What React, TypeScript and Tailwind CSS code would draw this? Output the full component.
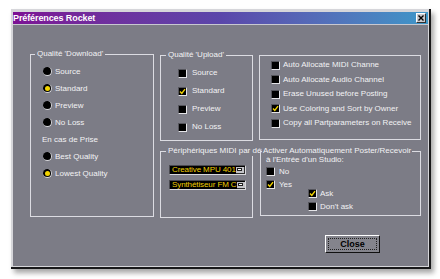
const Check = () => (
  <svg width="7" height="7" viewBox="0 0 7 7" className="block">
    <path d="M1 3.5 L2.8 5.5 L6 1.2" stroke="#f2d400" strokeWidth="1.4" fill="none" />
  </svg>
);

const CheckBox = ({ checked = false }: { checked?: boolean }) => (
  <div className="w-[9px] h-[9px] shrink-0 bg-black border border-t-[#55555c] border-l-[#55555c] border-b-[#e4e4e8] border-r-[#e4e4e8] flex items-center justify-center">
    {checked && <Check />}
  </div>
);

const Radio = ({ checked = false }: { checked?: boolean }) => (
  <div className="w-[9px] h-[9px] shrink-0 rounded-full bg-black border-b border-r border-[#d8d8dc] flex items-center justify-center">
    {checked && <div className="w-[5px] h-[5px] rounded-full bg-[#f2d400]" />}
  </div>
);

const Group = ({
  label,
  className,
  labelClass = "left-[4px] px-[2px]",
  children,
}: {
  label?: string;
  className: string;
  labelClass?: string;
  children: React.ReactNode;
}) => (
  <div className={`relative border border-[#dcdce2] ${className}`}>
    {label && (
      <span
        className={`absolute -top-[6px] leading-[10px] whitespace-nowrap bg-[#7c7c86] ${labelClass}`}
      >
        {label}
      </span>
    )}
    {children}
  </div>
);

const Dropdown = ({ value }: { value: string }) => (
  <div className="w-[77px] h-[10px] bg-black border border-t-[#4a4a50] border-l-[#4a4a50] border-b-[#d8d8dc] border-r-[#d8d8dc] flex items-center overflow-hidden">
    <span className="flex-1 whitespace-nowrap pl-[2px] leading-[8px] text-[#f2d000] tracking-[-0.1px]">
      {value}
    </span>
    <div className="w-[9px] h-[7px] mr-[1px] shrink-0 bg-[#c4c4c8] border-b border-r border-[#303030] flex items-center justify-center">
      <div className="w-[5px] h-[3px] bg-white border border-[#202020]" />
    </div>
  </div>
);

export default function App() {
  const download = [
    { label: "Source", checked: false },
    { label: "Standard", checked: true },
    { label: "Preview", checked: false },
    { label: "No Loss", checked: false },
  ];
  const upload = [
    { label: "Source", checked: false },
    { label: "Standard", checked: true },
    { label: "Preview", checked: false },
    { label: "No Loss", checked: false },
  ];
  const options = [
    { label: "Auto Allocate MIDI Channe", checked: false },
    { label: "Auto Allocate Audio Channel", checked: false },
    { label: "Erase Unused before Posting", checked: false },
    { label: "Use Coloring and Sort by Owner", checked: true },
    { label: "Copy all Partparameters on Receive", checked: false },
  ];

  return (
    <div className="w-[440px] h-[279px] bg-white overflow-hidden font-['Liberation_Sans',Arial,sans-serif] text-[8px] text-[#f2f2f4]">
      <div className="ml-[11px] mt-[9px] w-[420px] h-[260px] border-r-2 border-b-2 border-[#18181a] shadow-[3px_4px_5px_rgba(0,0,0,0.35)]">
        <div className="h-full flex flex-col border-t-[3px] border-l-2 border-r border-b border-[#d6d6da] bg-[#7c7c86]">
          {/* title bar */}
          <div className="h-[12px] shrink-0 flex items-center bg-gradient-to-r from-[#7c1094] via-[#5a46aa] to-[#3c96c8] border-b border-[#c8c8d0] box-content">
            <span className="text-[9px] font-bold leading-[12px] text-white tracking-[-0.1px]">
              Préférences Rocket
            </span>
            <div className="ml-auto mr-[2px] w-[10px] h-[10px] bg-[#c8c8cc] border border-t-white border-l-white border-b-[#303030] border-r-[#303030] flex items-center justify-center">
              <svg width="6" height="6" viewBox="0 0 6 6" className="block">
                <path d="M0.5 0.5 L5.5 5.5 M5.5 0.5 L0.5 5.5" stroke="#000" strokeWidth="1.4" />
              </svg>
            </div>
          </div>

          {/* body */}
          <div className="flex-1 flex flex-col pl-[17px] pt-[29px]">
            <div className="flex">
              <Group label="Qualité 'Download'" className="w-[124px] h-[163px] pt-[8px] pl-[12px]">
                {download.map((d, i) => (
                  <div key={i} className="h-[17px] flex items-center gap-[3px]">
                    <Radio checked={d.checked} />
                    <span className="leading-[10px]">{d.label}</span>
                  </div>
                ))}
                <div className="h-[17px] flex items-center -ml-[1px] leading-[10px]">En cas de Prise</div>
                <div className="h-[17px] flex items-center gap-[3px]">
                  <Radio />
                  <span className="leading-[10px]">Best Quality</span>
                </div>
                <div className="h-[17px] flex items-center gap-[3px]">
                  <Radio checked />
                  <span className="leading-[10px]">Lowest Quality</span>
                </div>
              </Group>

              <div className="ml-[6px] flex flex-col">
                <div className="flex mt-[1px]">
                  <Group label="Qualité 'Upload'" labelClass="left-[5px] px-[2px]" className="w-[93px] h-[86px] pt-[8px] pl-[17px]">
                    {upload.map((u, i) => (
                      <div key={i} className="h-[18px] flex items-center gap-[5px]">
                        <CheckBox checked={u.checked} />
                        <span className="leading-[10px]">{u.label}</span>
                      </div>
                    ))}
                  </Group>
                  <Group className="ml-[6px] w-[162px] h-[85px] pt-[2px] pl-[11px]">
                    {options.map((o, i) => (
                      <div key={i} className="h-[14.5px] flex items-center gap-[3px]">
                        <CheckBox checked={o.checked} />
                        <span className="leading-[10px] whitespace-nowrap">{o.label}</span>
                      </div>
                    ))}
                  </Group>
                </div>

                <div className="flex mt-[10px]">
                  <Group
                    label="Périphériques MIDI par défa"
                    labelClass="left-[5px] pl-[2px] w-[96px] overflow-hidden"
                    className="w-[93px] h-[67px] pt-[13px] pl-[8px] flex flex-col gap-[5px]"
                  >
                    <Dropdown value="Creative MPU 401" />
                    <Dropdown value="Synthétiseur FM C" />
                  </Group>
                  <Group
                    label="Activer Automatiquement Poster/Recevoir"
                    labelClass="left-[1px] px-[1px] z-10"
                    className="ml-[7px] w-[161px] h-[65px] pt-[3px] pl-[5px]"
                  >
                    <div className="leading-[10px] whitespace-nowrap">à l'Entrée d'un Studio:</div>
                    <div className="h-[13px] flex items-center gap-[4px]">
                      <CheckBox />
                      <span className="leading-[10px]">No</span>
                    </div>
                    <div className="h-[13px] flex items-center gap-[4px]">
                      <CheckBox checked />
                      <span className="leading-[10px]">Yes</span>
                    </div>
                    <div className="pl-[42px]">
                      <div className="-mt-[4px] h-[13px] flex items-center gap-[3px]">
                        <CheckBox checked />
                        <span className="leading-[10px]">Ask</span>
                      </div>
                      <div className="h-[13px] flex items-center gap-[3px]">
                        <CheckBox />
                        <span className="leading-[10px]">Don't ask</span>
                      </div>
                    </div>
                  </Group>
                </div>
              </div>
            </div>

            <div className="flex justify-end pr-[48px] mt-[17px]">
              <button className="w-[55px] h-[18px] bg-[#84848c] border border-t-white border-l-white border-b-[#101010] border-r-[#101010] p-[2px]">
                <div className="w-full h-full border border-dotted border-[#202020] flex items-center justify-center">
                  <span className="text-[9px] font-bold text-black leading-[10px]">Close</span>
                </div>
              </button>
            </div>
          </div>
        </div>
      </div>
    </div>
  );
}
